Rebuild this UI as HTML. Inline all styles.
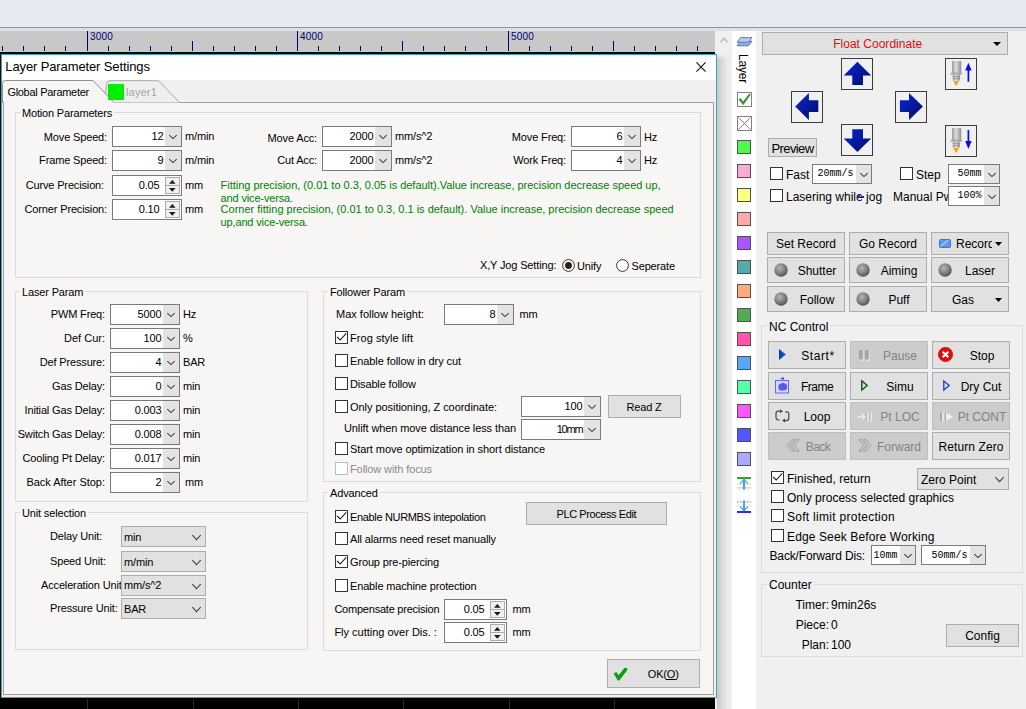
<!DOCTYPE html>
<html><head><meta charset="utf-8"><title>Layer Parameter Settings</title>
<style>
html,body{margin:0;padding:0;}
body{width:1026px;height:709px;overflow:hidden;position:relative;background:#f0f0f0;font-family:"Liberation Sans",sans-serif;font-size:11px;}
#root{position:absolute;left:0;top:0;width:1026px;height:709px;overflow:hidden;}
#root div{position:absolute;}
#root svg{position:absolute;overflow:visible;}
</style></head><body><div id="root">
<div style="left:0px;top:0px;width:1026px;height:27px;background:#e7eaf0;"></div>
<div style="left:0px;top:27px;width:1026px;height:1px;background:#90949c;"></div>
<div style="left:0px;top:28px;width:1026px;height:3px;background:#dde0e6;"></div>
<div style="left:0px;top:31px;width:715px;height:21px;background:#c8c8c8;"></div>
<div style="left:0px;top:52px;width:715px;height:2px;background:#000;"></div>
<div style="left:2px;top:46px;width:1px;height:5px;background:#00007a;"></div>
<div style="left:23px;top:46px;width:1px;height:5px;background:#00007a;"></div>
<div style="left:44px;top:46px;width:1px;height:5px;background:#00007a;"></div>
<div style="left:65px;top:46px;width:1px;height:5px;background:#00007a;"></div>
<div style="left:87px;top:31px;width:1px;height:20px;background:#00007a;"></div>
<div style="left:108px;top:46px;width:1px;height:5px;background:#00007a;"></div>
<div style="left:129px;top:46px;width:1px;height:5px;background:#00007a;"></div>
<div style="left:150px;top:46px;width:1px;height:5px;background:#00007a;"></div>
<div style="left:171px;top:46px;width:1px;height:5px;background:#00007a;"></div>
<div style="left:192px;top:41px;width:1px;height:10px;background:#00007a;"></div>
<div style="left:213px;top:46px;width:1px;height:5px;background:#00007a;"></div>
<div style="left:234px;top:46px;width:1px;height:5px;background:#00007a;"></div>
<div style="left:255px;top:46px;width:1px;height:5px;background:#00007a;"></div>
<div style="left:276px;top:46px;width:1px;height:5px;background:#00007a;"></div>
<div style="left:297px;top:31px;width:1px;height:20px;background:#00007a;"></div>
<div style="left:318px;top:46px;width:1px;height:5px;background:#00007a;"></div>
<div style="left:339px;top:46px;width:1px;height:5px;background:#00007a;"></div>
<div style="left:360px;top:46px;width:1px;height:5px;background:#00007a;"></div>
<div style="left:381px;top:46px;width:1px;height:5px;background:#00007a;"></div>
<div style="left:402px;top:41px;width:1px;height:10px;background:#00007a;"></div>
<div style="left:423px;top:46px;width:1px;height:5px;background:#00007a;"></div>
<div style="left:444px;top:46px;width:1px;height:5px;background:#00007a;"></div>
<div style="left:465px;top:46px;width:1px;height:5px;background:#00007a;"></div>
<div style="left:486px;top:46px;width:1px;height:5px;background:#00007a;"></div>
<div style="left:508px;top:31px;width:1px;height:20px;background:#00007a;"></div>
<div style="left:529px;top:46px;width:1px;height:5px;background:#00007a;"></div>
<div style="left:550px;top:46px;width:1px;height:5px;background:#00007a;"></div>
<div style="left:571px;top:46px;width:1px;height:5px;background:#00007a;"></div>
<div style="left:592px;top:46px;width:1px;height:5px;background:#00007a;"></div>
<div style="left:613px;top:41px;width:1px;height:10px;background:#00007a;"></div>
<div style="left:634px;top:46px;width:1px;height:5px;background:#00007a;"></div>
<div style="left:655px;top:46px;width:1px;height:5px;background:#00007a;"></div>
<div style="left:676px;top:46px;width:1px;height:5px;background:#00007a;"></div>
<div style="left:697px;top:46px;width:1px;height:5px;background:#00007a;"></div>
<div style="left:718px;top:31px;width:1px;height:20px;background:#00007a;"></div>
<div style="left:90.00px;top:30.00px;font-family:'Liberation Sans', sans-serif;font-size:10px;line-height:14px;color:#00007a;white-space:pre;letter-spacing:0.200px;">3000</div>
<div style="left:300.00px;top:30.00px;font-family:'Liberation Sans', sans-serif;font-size:10px;line-height:14px;color:#00007a;white-space:pre;letter-spacing:0.200px;">4000</div>
<div style="left:511.00px;top:30.00px;font-family:'Liberation Sans', sans-serif;font-size:10px;line-height:14px;color:#00007a;white-space:pre;letter-spacing:0.200px;">5000</div>
<div style="left:715px;top:31px;width:17px;height:678px;background:#f0f0f0;"></div>
<svg style="left:720px;top:37px" width="8" height="6" viewBox="0 0 8 6"><path d="M0.5 5.2 L4 1.2 L7.5 5.2" fill="none" stroke="#c0c0c0" stroke-width="1.7"/></svg>
<div style="left:717px;top:54px;width:15px;height:655px;background:linear-gradient(to right,#c6c6c6 0%,#d8d8d8 30%,#e9e9e9 65%,#f0f0f0 100%);"></div>
<div style="left:715px;top:54px;width:17px;height:6px;background:linear-gradient(to bottom,#f0f0f0 0%,rgba(240,240,240,0) 100%);"></div>
<div style="left:732px;top:31px;width:24px;height:678px;background:#fff;"></div>
<div style="left:0px;top:698px;width:715px;height:11px;background:#000;"></div>
<div style="left:87px;top:699px;width:1px;height:10px;background:#2a2a2a;"></div>
<div style="left:193px;top:699px;width:1px;height:10px;background:#2a2a2a;"></div>
<div style="left:298px;top:699px;width:1px;height:10px;background:#2a2a2a;"></div>
<div style="left:403px;top:699px;width:1px;height:10px;background:#2a2a2a;"></div>
<div style="left:509px;top:699px;width:1px;height:10px;background:#2a2a2a;"></div>
<div style="left:614px;top:699px;width:1px;height:10px;background:#2a2a2a;"></div>
<div style="left:0px;top:54px;width:717px;height:644px;background:#f0f0f0;border:1px solid #35a8c0;box-sizing:border-box;"></div>
<div style="left:0px;top:54px;width:1px;height:644px;background:#0a0a0a;"></div>
<div style="left:1px;top:54px;width:1px;height:643px;background:#35a8c0;"></div>
<div style="left:2px;top:55px;width:714px;height:25px;background:#fff;"></div>
<div style="left:5.30px;top:57.90px;font-family:'Liberation Sans', sans-serif;font-size:13px;line-height:17px;color:#000;white-space:pre;letter-spacing:-0.121px;">Layer Parameter Settings</div>
<svg style="left:696px;top:62px" width="10" height="10" viewBox="0 0 10 10"><path d="M0.4 0.4 L9.6 9.6 M9.6 0.4 L0.4 9.6" stroke="#111" stroke-width="1.1" fill="none"/></svg>
<div style="left:3px;top:102px;width:711px;height:593px;background:#f7f6f5;border:1px solid #a0a0a0;box-sizing:border-box;"></div>
<svg style="left:0;top:79px" width="220" height="28" viewBox="0 0 220 28">
<path d="M104.5 23.5 L106.5 4.5 Q107 1.7 110 1.7 L158.5 1.7 L179.5 23.5" fill="#efefee" stroke="#a8a8a8" stroke-width="1"/>
<path d="M2.5 24 L2.5 4.5 Q2.5 1.5 5.5 1.5 L93 1.5 L114 23.5" fill="#f7f6f5" stroke="#909090" stroke-width="1"/>
<rect x="3" y="23" width="110.5" height="2" fill="#f7f6f5"/>
<rect x="3" y="23" width="1" height="3" fill="#a0a0a0"/>
</svg>
<div style="left:7.40px;top:84.50px;font-family:'Liberation Sans', sans-serif;font-size:11px;line-height:15px;color:#000;white-space:pre;letter-spacing:-0.295px;">Global Parameter</div>
<div style="left:108px;top:84px;width:16px;height:16px;background:#00f000;"></div>
<div style="left:126.00px;top:85.00px;font-family:'Liberation Sans', sans-serif;font-size:11px;line-height:15px;color:#a4a4a4;white-space:pre;letter-spacing:0.172px;">layer1</div>
<div style="left:15px;top:112px;width:686px;height:166px;border:1px solid #dcdcdc;box-sizing:border-box;"></div>
<div style="left:22.00px;top:106.00px;font-family:'Liberation Sans', sans-serif;font-size:11px;line-height:15px;color:#000;white-space:pre;letter-spacing:-0.173px;background:#f7f6f5;padding:0 2px;margin-left:-2px;">Motion Parameters</div>
<div style="left:43.82px;top:130.00px;font-family:'Liberation Sans', sans-serif;font-size:11px;line-height:15px;color:#000;white-space:pre;letter-spacing:-0.150px;">Move Speed:</div>
<div style="left:112px;top:126px;width:70px;height:21px;background:#fff;border:1px solid #7a7a7a;box-sizing:border-box;"></div>
<div style="left:165px;top:127px;width:16px;height:19px;background:#e3e3e3;"></div>
<svg style="left:169.0px;top:135.0px" width="8" height="4" viewBox="0 0 8 4"><path d="M0.3 0.2 L4.0 3.6 L7.7 0.2" fill="none" stroke="#404040" stroke-width="1.1"/></svg>
<div style="left:151.55px;top:129.00px;font-family:'Liberation Sans', sans-serif;font-size:11px;line-height:15px;color:#000;white-space:pre;letter-spacing:-0.150px;">12</div>
<div style="left:185.00px;top:128.50px;font-family:'Liberation Sans', sans-serif;font-size:11px;line-height:15px;color:#000;white-space:pre;letter-spacing:-0.150px;">m/min</div>
<div style="left:39.10px;top:152.50px;font-family:'Liberation Sans', sans-serif;font-size:11px;line-height:15px;color:#000;white-space:pre;letter-spacing:-0.150px;">Frame Speed:</div>
<div style="left:112px;top:150px;width:70px;height:21px;background:#fff;border:1px solid #7a7a7a;box-sizing:border-box;"></div>
<div style="left:165px;top:151px;width:16px;height:19px;background:#e3e3e3;"></div>
<svg style="left:169.0px;top:159.0px" width="8" height="4" viewBox="0 0 8 4"><path d="M0.3 0.2 L4.0 3.6 L7.7 0.2" fill="none" stroke="#404040" stroke-width="1.1"/></svg>
<div style="left:157.53px;top:153.00px;font-family:'Liberation Sans', sans-serif;font-size:11px;line-height:15px;color:#000;white-space:pre;letter-spacing:-0.150px;">9</div>
<div style="left:185.00px;top:152.50px;font-family:'Liberation Sans', sans-serif;font-size:11px;line-height:15px;color:#000;white-space:pre;letter-spacing:-0.150px;">m/min</div>
<div style="left:25.70px;top:177.50px;font-family:'Liberation Sans', sans-serif;font-size:11px;line-height:15px;color:#000;white-space:pre;letter-spacing:-0.150px;">Curve Precision:</div>
<div style="left:112px;top:175px;width:70px;height:21px;background:#fff;border:1px solid #7a7a7a;box-sizing:border-box;"></div>
<div style="left:165px;top:177px;width:15px;height:9px;background:#f0f0f0;border:1px solid #acacac;box-sizing:border-box;"></div>
<div style="left:165px;top:185px;width:15px;height:9px;background:#f0f0f0;border:1px solid #acacac;box-sizing:border-box;"></div>
<svg style="left:169.2px;top:179.6px" width="6.6" height="3.8" viewBox="0 0 6.6 3.8"><path d="M0 3.8 L3.3 0 L6.6 3.8 Z" fill="#1a1a1a"/></svg>
<svg style="left:169.2px;top:187.6px" width="6.6" height="3.8" viewBox="0 0 6.6 3.8"><path d="M0 0 L3.3 3.8 L6.6 0 Z" fill="#1a1a1a"/></svg>
<div style="left:138.68px;top:178.00px;font-family:'Liberation Sans', sans-serif;font-size:11px;line-height:15px;color:#000;white-space:pre;letter-spacing:-0.150px;">0.05</div>
<div style="left:185.00px;top:177.50px;font-family:'Liberation Sans', sans-serif;font-size:11px;line-height:15px;color:#000;white-space:pre;letter-spacing:-0.150px;">mm</div>
<div style="left:24.57px;top:201.50px;font-family:'Liberation Sans', sans-serif;font-size:11px;line-height:15px;color:#000;white-space:pre;letter-spacing:-0.150px;">Corner Precision:</div>
<div style="left:112px;top:199px;width:70px;height:21px;background:#fff;border:1px solid #7a7a7a;box-sizing:border-box;"></div>
<div style="left:165px;top:201px;width:15px;height:9px;background:#f0f0f0;border:1px solid #acacac;box-sizing:border-box;"></div>
<div style="left:165px;top:209px;width:15px;height:9px;background:#f0f0f0;border:1px solid #acacac;box-sizing:border-box;"></div>
<svg style="left:169.2px;top:203.6px" width="6.6" height="3.8" viewBox="0 0 6.6 3.8"><path d="M0 3.8 L3.3 0 L6.6 3.8 Z" fill="#1a1a1a"/></svg>
<svg style="left:169.2px;top:211.6px" width="6.6" height="3.8" viewBox="0 0 6.6 3.8"><path d="M0 0 L3.3 3.8 L6.6 0 Z" fill="#1a1a1a"/></svg>
<div style="left:138.68px;top:202.00px;font-family:'Liberation Sans', sans-serif;font-size:11px;line-height:15px;color:#000;white-space:pre;letter-spacing:-0.150px;">0.10</div>
<div style="left:185.00px;top:201.50px;font-family:'Liberation Sans', sans-serif;font-size:11px;line-height:15px;color:#000;white-space:pre;letter-spacing:-0.150px;">mm</div>
<div style="left:267.60px;top:130.50px;font-family:'Liberation Sans', sans-serif;font-size:11px;line-height:15px;color:#000;white-space:pre;letter-spacing:-0.150px;">Move Acc:</div>
<div style="left:322px;top:126px;width:70px;height:21px;background:#fff;border:1px solid #7a7a7a;box-sizing:border-box;"></div>
<div style="left:375px;top:127px;width:16px;height:19px;background:#e3e3e3;"></div>
<svg style="left:379.0px;top:135.0px" width="8" height="4" viewBox="0 0 8 4"><path d="M0.3 0.2 L4.0 3.6 L7.7 0.2" fill="none" stroke="#404040" stroke-width="1.1"/></svg>
<div style="left:349.62px;top:129.00px;font-family:'Liberation Sans', sans-serif;font-size:11px;line-height:15px;color:#000;white-space:pre;letter-spacing:-0.150px;">2000</div>
<div style="left:395.00px;top:128.50px;font-family:'Liberation Sans', sans-serif;font-size:11px;line-height:15px;color:#000;white-space:pre;letter-spacing:-0.150px;">mm/s^2</div>
<div style="left:277.23px;top:152.50px;font-family:'Liberation Sans', sans-serif;font-size:11px;line-height:15px;color:#000;white-space:pre;letter-spacing:-0.150px;">Cut Acc:</div>
<div style="left:322px;top:150px;width:70px;height:21px;background:#fff;border:1px solid #7a7a7a;box-sizing:border-box;"></div>
<div style="left:375px;top:151px;width:16px;height:19px;background:#e3e3e3;"></div>
<svg style="left:379.0px;top:159.0px" width="8" height="4" viewBox="0 0 8 4"><path d="M0.3 0.2 L4.0 3.6 L7.7 0.2" fill="none" stroke="#404040" stroke-width="1.1"/></svg>
<div style="left:349.62px;top:153.00px;font-family:'Liberation Sans', sans-serif;font-size:11px;line-height:15px;color:#000;white-space:pre;letter-spacing:-0.150px;">2000</div>
<div style="left:395.00px;top:152.50px;font-family:'Liberation Sans', sans-serif;font-size:11px;line-height:15px;color:#000;white-space:pre;letter-spacing:-0.150px;">mm/s^2</div>
<div style="left:511.86px;top:129.50px;font-family:'Liberation Sans', sans-serif;font-size:11px;line-height:15px;color:#000;white-space:pre;letter-spacing:-0.150px;">Move Freq:</div>
<div style="left:571px;top:126px;width:70px;height:21px;background:#fff;border:1px solid #7a7a7a;box-sizing:border-box;"></div>
<div style="left:624px;top:127px;width:16px;height:19px;background:#e3e3e3;"></div>
<svg style="left:628.0px;top:135.0px" width="8" height="4" viewBox="0 0 8 4"><path d="M0.3 0.2 L4.0 3.6 L7.7 0.2" fill="none" stroke="#404040" stroke-width="1.1"/></svg>
<div style="left:616.52px;top:129.00px;font-family:'Liberation Sans', sans-serif;font-size:11px;line-height:15px;color:#000;white-space:pre;letter-spacing:-0.150px;">6</div>
<div style="left:644.00px;top:129.50px;font-family:'Liberation Sans', sans-serif;font-size:11px;line-height:15px;color:#000;white-space:pre;letter-spacing:-0.150px;">Hz</div>
<div style="left:513.30px;top:152.50px;font-family:'Liberation Sans', sans-serif;font-size:11px;line-height:15px;color:#000;white-space:pre;letter-spacing:-0.150px;">Work Freq:</div>
<div style="left:571px;top:150px;width:70px;height:21px;background:#fff;border:1px solid #7a7a7a;box-sizing:border-box;"></div>
<div style="left:624px;top:151px;width:16px;height:19px;background:#e3e3e3;"></div>
<svg style="left:628.0px;top:159.0px" width="8" height="4" viewBox="0 0 8 4"><path d="M0.3 0.2 L4.0 3.6 L7.7 0.2" fill="none" stroke="#404040" stroke-width="1.1"/></svg>
<div style="left:616.52px;top:153.00px;font-family:'Liberation Sans', sans-serif;font-size:11px;line-height:15px;color:#000;white-space:pre;letter-spacing:-0.150px;">4</div>
<div style="left:644.00px;top:152.50px;font-family:'Liberation Sans', sans-serif;font-size:11px;line-height:15px;color:#000;white-space:pre;letter-spacing:-0.150px;">Hz</div>
<div style="left:220.60px;top:177.50px;font-family:'Liberation Sans', sans-serif;font-size:11px;line-height:15px;color:#008000;white-space:pre;letter-spacing:-0.020px;">Fitting precision, (0.01 to 0.3, 0.05 is default).Value increase, precision decrease speed up,</div>
<div style="left:220.60px;top:190.50px;font-family:'Liberation Sans', sans-serif;font-size:11px;line-height:15px;color:#008000;white-space:pre;letter-spacing:-0.150px;">and vice-versa.</div>
<div style="left:220.60px;top:201.50px;font-family:'Liberation Sans', sans-serif;font-size:11px;line-height:15px;color:#008000;white-space:pre;letter-spacing:-0.005px;">Corner fitting precision, (0.01 to 0.3, 0.1 is default). Value increase, precision decrease speed</div>
<div style="left:220.60px;top:214.50px;font-family:'Liberation Sans', sans-serif;font-size:11px;line-height:15px;color:#008000;white-space:pre;letter-spacing:-0.150px;">up,and vice-versa.</div>
<div style="left:480.00px;top:257.50px;font-family:'Liberation Sans', sans-serif;font-size:11px;line-height:15px;color:#000;white-space:pre;letter-spacing:-0.150px;">X,Y Jog Setting:</div>
<svg style="left:562px;top:259px" width="13" height="13" viewBox="0 0 13 13"><circle cx="6.5" cy="6.5" r="5.9" fill="#fff" stroke="#333" stroke-width="1"/><circle cx="6.5" cy="6.5" r="3.4" fill="#222"/></svg>
<div style="left:577.00px;top:258.50px;font-family:'Liberation Sans', sans-serif;font-size:11px;line-height:15px;color:#000;white-space:pre;letter-spacing:-0.150px;">Unify</div>
<svg style="left:616px;top:259px" width="13" height="13" viewBox="0 0 13 13"><circle cx="6.5" cy="6.5" r="5.9" fill="#fff" stroke="#333" stroke-width="1"/></svg>
<div style="left:631.50px;top:258.50px;font-family:'Liberation Sans', sans-serif;font-size:11px;line-height:15px;color:#000;white-space:pre;letter-spacing:-0.150px;">Seperate</div>
<div style="left:15px;top:291px;width:293px;height:211px;border:1px solid #dcdcdc;box-sizing:border-box;"></div>
<div style="left:22.00px;top:285.00px;font-family:'Liberation Sans', sans-serif;font-size:11px;line-height:15px;color:#000;white-space:pre;letter-spacing:-0.150px;background:#f7f6f5;padding:0 2px;margin-left:-2px;">Laser Param</div>
<div style="left:50.73px;top:306.50px;font-family:'Liberation Sans', sans-serif;font-size:11px;line-height:15px;color:#000;white-space:pre;letter-spacing:-0.150px;">PWM Freq:</div>
<div style="left:110px;top:304px;width:70px;height:21px;background:#fff;border:1px solid #7a7a7a;box-sizing:border-box;"></div>
<div style="left:163px;top:305px;width:16px;height:19px;background:#e3e3e3;"></div>
<svg style="left:167.0px;top:313.0px" width="8" height="4" viewBox="0 0 8 4"><path d="M0.3 0.2 L4.0 3.6 L7.7 0.2" fill="none" stroke="#404040" stroke-width="1.1"/></svg>
<div style="left:137.62px;top:307.00px;font-family:'Liberation Sans', sans-serif;font-size:11px;line-height:15px;color:#000;white-space:pre;letter-spacing:-0.150px;">5000</div>
<div style="left:183.00px;top:306.50px;font-family:'Liberation Sans', sans-serif;font-size:11px;line-height:15px;color:#000;white-space:pre;letter-spacing:-0.150px;">Hz</div>
<div style="left:64.00px;top:330.50px;font-family:'Liberation Sans', sans-serif;font-size:11px;line-height:15px;color:#000;white-space:pre;letter-spacing:0.004px;">Def Cur:</div>
<div style="left:110px;top:328px;width:70px;height:21px;background:#fff;border:1px solid #7a7a7a;box-sizing:border-box;"></div>
<div style="left:163px;top:329px;width:16px;height:19px;background:#e3e3e3;"></div>
<svg style="left:167.0px;top:337.0px" width="8" height="4" viewBox="0 0 8 4"><path d="M0.3 0.2 L4.0 3.6 L7.7 0.2" fill="none" stroke="#404040" stroke-width="1.1"/></svg>
<div style="left:143.59px;top:331.00px;font-family:'Liberation Sans', sans-serif;font-size:11px;line-height:15px;color:#000;white-space:pre;letter-spacing:-0.150px;">100</div>
<div style="left:183.00px;top:330.50px;font-family:'Liberation Sans', sans-serif;font-size:11px;line-height:15px;color:#000;white-space:pre;letter-spacing:-0.150px;">%</div>
<div style="left:39.70px;top:354.50px;font-family:'Liberation Sans', sans-serif;font-size:11px;line-height:15px;color:#000;white-space:pre;letter-spacing:-0.150px;">Def Pressure:</div>
<div style="left:110px;top:352px;width:70px;height:21px;background:#fff;border:1px solid #7a7a7a;box-sizing:border-box;"></div>
<div style="left:163px;top:353px;width:16px;height:19px;background:#e3e3e3;"></div>
<svg style="left:167.0px;top:361.0px" width="8" height="4" viewBox="0 0 8 4"><path d="M0.3 0.2 L4.0 3.6 L7.7 0.2" fill="none" stroke="#404040" stroke-width="1.1"/></svg>
<div style="left:155.53px;top:355.00px;font-family:'Liberation Sans', sans-serif;font-size:11px;line-height:15px;color:#000;white-space:pre;letter-spacing:-0.150px;">4</div>
<div style="left:183.00px;top:354.50px;font-family:'Liberation Sans', sans-serif;font-size:11px;line-height:15px;color:#000;white-space:pre;letter-spacing:-0.150px;">BAR</div>
<div style="left:52.08px;top:378.50px;font-family:'Liberation Sans', sans-serif;font-size:11px;line-height:15px;color:#000;white-space:pre;letter-spacing:-0.150px;">Gas Delay:</div>
<div style="left:110px;top:376px;width:70px;height:21px;background:#fff;border:1px solid #7a7a7a;box-sizing:border-box;"></div>
<div style="left:163px;top:377px;width:16px;height:19px;background:#e3e3e3;"></div>
<svg style="left:167.0px;top:385.0px" width="8" height="4" viewBox="0 0 8 4"><path d="M0.3 0.2 L4.0 3.6 L7.7 0.2" fill="none" stroke="#404040" stroke-width="1.1"/></svg>
<div style="left:155.53px;top:379.00px;font-family:'Liberation Sans', sans-serif;font-size:11px;line-height:15px;color:#000;white-space:pre;letter-spacing:-0.150px;">0</div>
<div style="left:183.00px;top:378.50px;font-family:'Liberation Sans', sans-serif;font-size:11px;line-height:15px;color:#000;white-space:pre;letter-spacing:-0.150px;">min</div>
<div style="left:24.54px;top:402.50px;font-family:'Liberation Sans', sans-serif;font-size:11px;line-height:15px;color:#000;white-space:pre;letter-spacing:-0.150px;">Initial Gas Delay:</div>
<div style="left:110px;top:400px;width:70px;height:21px;background:#fff;border:1px solid #7a7a7a;box-sizing:border-box;"></div>
<div style="left:163px;top:401px;width:16px;height:19px;background:#e3e3e3;"></div>
<svg style="left:167.0px;top:409.0px" width="8" height="4" viewBox="0 0 8 4"><path d="M0.3 0.2 L4.0 3.6 L7.7 0.2" fill="none" stroke="#404040" stroke-width="1.1"/></svg>
<div style="left:134.72px;top:403.00px;font-family:'Liberation Sans', sans-serif;font-size:11px;line-height:15px;color:#000;white-space:pre;letter-spacing:-0.150px;">0.003</div>
<div style="left:183.00px;top:402.50px;font-family:'Liberation Sans', sans-serif;font-size:11px;line-height:15px;color:#000;white-space:pre;letter-spacing:-0.150px;">min</div>
<div style="left:17.67px;top:426.50px;font-family:'Liberation Sans', sans-serif;font-size:11px;line-height:15px;color:#000;white-space:pre;letter-spacing:-0.150px;">Switch Gas Delay:</div>
<div style="left:110px;top:424px;width:70px;height:21px;background:#fff;border:1px solid #7a7a7a;box-sizing:border-box;"></div>
<div style="left:163px;top:425px;width:16px;height:19px;background:#e3e3e3;"></div>
<svg style="left:167.0px;top:433.0px" width="8" height="4" viewBox="0 0 8 4"><path d="M0.3 0.2 L4.0 3.6 L7.7 0.2" fill="none" stroke="#404040" stroke-width="1.1"/></svg>
<div style="left:134.72px;top:427.00px;font-family:'Liberation Sans', sans-serif;font-size:11px;line-height:15px;color:#000;white-space:pre;letter-spacing:-0.150px;">0.008</div>
<div style="left:183.00px;top:426.50px;font-family:'Liberation Sans', sans-serif;font-size:11px;line-height:15px;color:#000;white-space:pre;letter-spacing:-0.150px;">min</div>
<div style="left:22.55px;top:450.50px;font-family:'Liberation Sans', sans-serif;font-size:11px;line-height:15px;color:#000;white-space:pre;letter-spacing:-0.150px;">Cooling Pt Delay:</div>
<div style="left:110px;top:448px;width:70px;height:21px;background:#fff;border:1px solid #7a7a7a;box-sizing:border-box;"></div>
<div style="left:163px;top:449px;width:16px;height:19px;background:#e3e3e3;"></div>
<svg style="left:167.0px;top:457.0px" width="8" height="4" viewBox="0 0 8 4"><path d="M0.3 0.2 L4.0 3.6 L7.7 0.2" fill="none" stroke="#404040" stroke-width="1.1"/></svg>
<div style="left:134.72px;top:451.00px;font-family:'Liberation Sans', sans-serif;font-size:11px;line-height:15px;color:#000;white-space:pre;letter-spacing:-0.150px;">0.017</div>
<div style="left:183.00px;top:450.50px;font-family:'Liberation Sans', sans-serif;font-size:11px;line-height:15px;color:#000;white-space:pre;letter-spacing:-0.150px;">min</div>
<div style="left:26.40px;top:474.50px;font-family:'Liberation Sans', sans-serif;font-size:11px;line-height:15px;color:#000;white-space:pre;letter-spacing:-0.017px;">Back After Stop:</div>
<div style="left:110px;top:472px;width:70px;height:21px;background:#fff;border:1px solid #7a7a7a;box-sizing:border-box;"></div>
<div style="left:163px;top:473px;width:16px;height:19px;background:#e3e3e3;"></div>
<svg style="left:167.0px;top:481.0px" width="8" height="4" viewBox="0 0 8 4"><path d="M0.3 0.2 L4.0 3.6 L7.7 0.2" fill="none" stroke="#404040" stroke-width="1.1"/></svg>
<div style="left:155.53px;top:475.00px;font-family:'Liberation Sans', sans-serif;font-size:11px;line-height:15px;color:#000;white-space:pre;letter-spacing:-0.150px;">2</div>
<div style="left:185.00px;top:474.50px;font-family:'Liberation Sans', sans-serif;font-size:11px;line-height:15px;color:#000;white-space:pre;letter-spacing:-0.150px;">mm</div>
<div style="left:15px;top:512px;width:293px;height:138px;border:1px solid #dcdcdc;box-sizing:border-box;"></div>
<div style="left:22.00px;top:506.00px;font-family:'Liberation Sans', sans-serif;font-size:11px;line-height:15px;color:#000;white-space:pre;letter-spacing:-0.150px;background:#f7f6f5;padding:0 2px;margin-left:-2px;">Unit selection</div>
<div style="left:121px;top:526px;width:85px;height:21px;background:#e1e1e1;border:1px solid #adadad;box-sizing:border-box;"></div>
<svg style="left:191.5px;top:534.5px" width="9" height="5" viewBox="0 0 9 5"><path d="M0.3 0.2 L4.5 4.6 L8.7 0.2" fill="none" stroke="#404040" stroke-width="1.1"/></svg>
<div style="left:124.00px;top:529.60px;font-family:'Liberation Sans', sans-serif;font-size:11px;line-height:15px;color:#000;white-space:pre;letter-spacing:-0.150px;">min</div>
<div style="left:50.00px;top:528.50px;font-family:'Liberation Sans', sans-serif;font-size:11px;line-height:15px;color:#000;white-space:pre;letter-spacing:-0.150px;">Delay Unit:</div>
<div style="left:121px;top:551px;width:85px;height:21px;background:#e1e1e1;border:1px solid #adadad;box-sizing:border-box;"></div>
<svg style="left:191.5px;top:559.5px" width="9" height="5" viewBox="0 0 9 5"><path d="M0.3 0.2 L4.5 4.6 L8.7 0.2" fill="none" stroke="#404040" stroke-width="1.1"/></svg>
<div style="left:124.00px;top:554.60px;font-family:'Liberation Sans', sans-serif;font-size:11px;line-height:15px;color:#000;white-space:pre;letter-spacing:-0.150px;">m/min</div>
<div style="left:50.00px;top:553.50px;font-family:'Liberation Sans', sans-serif;font-size:11px;line-height:15px;color:#000;white-space:pre;letter-spacing:-0.150px;">Speed Unit:</div>
<div style="left:121px;top:575px;width:85px;height:21px;background:#e1e1e1;border:1px solid #adadad;box-sizing:border-box;"></div>
<svg style="left:191.5px;top:583.5px" width="9" height="5" viewBox="0 0 9 5"><path d="M0.3 0.2 L4.5 4.6 L8.7 0.2" fill="none" stroke="#404040" stroke-width="1.1"/></svg>
<div style="left:124.00px;top:578.60px;font-family:'Liberation Sans', sans-serif;font-size:11px;line-height:15px;color:#000;white-space:pre;letter-spacing:-0.150px;">mm/s^2</div>
<div style="left:41.00px;top:577.50px;font-family:'Liberation Sans', sans-serif;font-size:11px;line-height:15px;color:#000;white-space:pre;letter-spacing:-0.150px;background:#f7f6f5;">Acceleration Unit</div>
<div style="left:121px;top:598px;width:85px;height:21px;background:#e1e1e1;border:1px solid #adadad;box-sizing:border-box;"></div>
<svg style="left:191.5px;top:606.5px" width="9" height="5" viewBox="0 0 9 5"><path d="M0.3 0.2 L4.5 4.6 L8.7 0.2" fill="none" stroke="#404040" stroke-width="1.1"/></svg>
<div style="left:124.00px;top:601.60px;font-family:'Liberation Sans', sans-serif;font-size:11px;line-height:15px;color:#000;white-space:pre;letter-spacing:-0.150px;">BAR</div>
<div style="left:50.00px;top:600.50px;font-family:'Liberation Sans', sans-serif;font-size:11px;line-height:15px;color:#000;white-space:pre;letter-spacing:-0.150px;">Pressure Unit:</div>
<div style="left:121px;top:575px;width:85px;height:21px;background:#e1e1e1;border:1px solid #adadad;box-sizing:border-box;"></div>
<svg style="left:191.5px;top:583.5px" width="9" height="5" viewBox="0 0 9 5"><path d="M0.3 0.2 L4.5 4.6 L8.7 0.2" fill="none" stroke="#404040" stroke-width="1.1"/></svg>
<div style="left:124.00px;top:578.00px;font-family:'Liberation Sans', sans-serif;font-size:11px;line-height:15px;color:#000;white-space:pre;letter-spacing:-0.150px;">mm/s^2</div>
<div style="left:323px;top:291px;width:378px;height:191px;border:1px solid #dcdcdc;box-sizing:border-box;"></div>
<div style="left:330.00px;top:285.00px;font-family:'Liberation Sans', sans-serif;font-size:11px;line-height:15px;color:#000;white-space:pre;letter-spacing:-0.150px;background:#f7f6f5;padding:0 2px;margin-left:-2px;">Follower Param</div>
<div style="left:336.00px;top:306.50px;font-family:'Liberation Sans', sans-serif;font-size:11px;line-height:15px;color:#000;white-space:pre;letter-spacing:-0.003px;">Max follow height:</div>
<div style="left:444px;top:304px;width:70px;height:21px;background:#fff;border:1px solid #7a7a7a;box-sizing:border-box;"></div>
<div style="left:497px;top:305px;width:16px;height:19px;background:#e3e3e3;"></div>
<svg style="left:501.0px;top:313.0px" width="8" height="4" viewBox="0 0 8 4"><path d="M0.3 0.2 L4.0 3.6 L7.7 0.2" fill="none" stroke="#404040" stroke-width="1.1"/></svg>
<div style="left:489.52px;top:307.00px;font-family:'Liberation Sans', sans-serif;font-size:11px;line-height:15px;color:#000;white-space:pre;letter-spacing:-0.150px;">8</div>
<div style="left:519.50px;top:306.50px;font-family:'Liberation Sans', sans-serif;font-size:11px;line-height:15px;color:#000;white-space:pre;letter-spacing:-0.150px;">mm</div>
<div style="left:335px;top:331px;width:13px;height:13px;background:#fff;border:1px solid #333;box-sizing:border-box;"></div>
<svg style="left:335px;top:331px" width="13" height="13" viewBox="0 0 13 13"><path d="M2 5.8 L5.2 9 L11.2 2.4" fill="none" stroke="#1a1a1a" stroke-width="1.1"/></svg>
<div style="left:350.00px;top:330.50px;font-family:'Liberation Sans', sans-serif;font-size:11px;line-height:15px;color:#000;white-space:pre;letter-spacing:0.043px;">Frog style lift</div>
<div style="left:335px;top:354px;width:13px;height:13px;background:#fff;border:1px solid #333;box-sizing:border-box;"></div>
<div style="left:350.00px;top:353.50px;font-family:'Liberation Sans', sans-serif;font-size:11px;line-height:15px;color:#000;white-space:pre;letter-spacing:-0.089px;">Enable follow in dry cut</div>
<div style="left:335px;top:377px;width:13px;height:13px;background:#fff;border:1px solid #333;box-sizing:border-box;"></div>
<div style="left:350.00px;top:376.50px;font-family:'Liberation Sans', sans-serif;font-size:11px;line-height:15px;color:#000;white-space:pre;letter-spacing:-0.150px;">Disable follow</div>
<div style="left:335px;top:400px;width:13px;height:13px;background:#fff;border:1px solid #333;box-sizing:border-box;"></div>
<div style="left:350.00px;top:399.50px;font-family:'Liberation Sans', sans-serif;font-size:11px;line-height:15px;color:#000;white-space:pre;letter-spacing:-0.051px;">Only positioning, Z coordinate:</div>
<div style="left:521px;top:396px;width:80px;height:21px;background:#fff;border:1px solid #7a7a7a;box-sizing:border-box;"></div>
<div style="left:584px;top:397px;width:16px;height:19px;background:#e3e3e3;"></div>
<svg style="left:588.0px;top:405.0px" width="8" height="4" viewBox="0 0 8 4"><path d="M0.3 0.2 L4.0 3.6 L7.7 0.2" fill="none" stroke="#404040" stroke-width="1.1"/></svg>
<div style="left:564.59px;top:399.00px;font-family:'Liberation Sans', sans-serif;font-size:11px;line-height:15px;color:#000;white-space:pre;letter-spacing:-0.150px;">100</div>
<div style="left:608px;top:395px;width:73px;height:23px;background:#e1e1e1;border:1px solid #adadad;box-sizing:border-box;"></div>
<div style="left:626.41px;top:399.70px;font-family:'Liberation Sans', sans-serif;font-size:11px;line-height:15px;color:#000;white-space:pre;letter-spacing:-0.150px;">Read Z</div>
<div style="left:344.00px;top:420.50px;font-family:'Liberation Sans', sans-serif;font-size:11px;line-height:15px;color:#000;white-space:pre;letter-spacing:-0.100px;">Unlift when move distance less than</div>
<div style="left:521px;top:419px;width:80px;height:21px;background:#fff;border:1px solid #7a7a7a;box-sizing:border-box;"></div>
<div style="left:584px;top:420px;width:16px;height:19px;background:#e3e3e3;"></div>
<svg style="left:588.0px;top:428.0px" width="8" height="4" viewBox="0 0 8 4"><path d="M0.3 0.2 L4.0 3.6 L7.7 0.2" fill="none" stroke="#404040" stroke-width="1.1"/></svg>
<div style="left:556.70px;top:422.00px;font-family:'Liberation Sans', sans-serif;font-size:11px;line-height:15px;color:#000;white-space:pre;letter-spacing:-1.191px;">10mm</div>
<div style="left:335px;top:442px;width:13px;height:13px;background:#fff;border:1px solid #333;box-sizing:border-box;"></div>
<div style="left:350.00px;top:441.50px;font-family:'Liberation Sans', sans-serif;font-size:11px;line-height:15px;color:#000;white-space:pre;letter-spacing:-0.075px;">Start move optimization in short distance</div>
<div style="left:335px;top:462px;width:13px;height:13px;background:#fff;border:1px solid #bcbcbc;box-sizing:border-box;"></div>
<div style="left:350.00px;top:461.50px;font-family:'Liberation Sans', sans-serif;font-size:11px;line-height:15px;color:#8a8a8a;white-space:pre;letter-spacing:-0.104px;">Follow with focus</div>
<div style="left:323px;top:492px;width:378px;height:159px;border:1px solid #dcdcdc;box-sizing:border-box;"></div>
<div style="left:330.00px;top:486.00px;font-family:'Liberation Sans', sans-serif;font-size:11px;line-height:15px;color:#000;white-space:pre;letter-spacing:-0.150px;background:#f7f6f5;padding:0 2px;margin-left:-2px;">Advanced</div>
<div style="left:335px;top:510px;width:13px;height:13px;background:#fff;border:1px solid #333;box-sizing:border-box;"></div>
<svg style="left:335px;top:510px" width="13" height="13" viewBox="0 0 13 13"><path d="M2 5.8 L5.2 9 L11.2 2.4" fill="none" stroke="#1a1a1a" stroke-width="1.1"/></svg>
<div style="left:350.00px;top:509.50px;font-family:'Liberation Sans', sans-serif;font-size:11px;line-height:15px;color:#000;white-space:pre;letter-spacing:-0.339px;">Enable NURMBS intepolation</div>
<div style="left:526px;top:502px;width:141px;height:23px;background:#e1e1e1;border:1px solid #adadad;box-sizing:border-box;"></div>
<div style="left:556.55px;top:506.70px;font-family:'Liberation Sans', sans-serif;font-size:11px;line-height:15px;color:#000;white-space:pre;letter-spacing:-0.419px;">PLC Process Edit</div>
<div style="left:335px;top:532px;width:13px;height:13px;background:#fff;border:1px solid #333;box-sizing:border-box;"></div>
<div style="left:350.00px;top:531.50px;font-family:'Liberation Sans', sans-serif;font-size:11px;line-height:15px;color:#000;white-space:pre;letter-spacing:-0.150px;">All alarms need reset manually</div>
<div style="left:335px;top:555px;width:13px;height:13px;background:#fff;border:1px solid #333;box-sizing:border-box;"></div>
<svg style="left:335px;top:555px" width="13" height="13" viewBox="0 0 13 13"><path d="M2 5.8 L5.2 9 L11.2 2.4" fill="none" stroke="#1a1a1a" stroke-width="1.1"/></svg>
<div style="left:350.00px;top:554.50px;font-family:'Liberation Sans', sans-serif;font-size:11px;line-height:15px;color:#000;white-space:pre;letter-spacing:-0.150px;">Group pre-piercing</div>
<div style="left:335px;top:579px;width:13px;height:13px;background:#fff;border:1px solid #333;box-sizing:border-box;"></div>
<div style="left:350.00px;top:578.50px;font-family:'Liberation Sans', sans-serif;font-size:11px;line-height:15px;color:#000;white-space:pre;letter-spacing:-0.150px;">Enable machine protection</div>
<div style="left:334.40px;top:601.50px;font-family:'Liberation Sans', sans-serif;font-size:11px;line-height:15px;color:#000;white-space:pre;letter-spacing:-0.223px;">Compensate precision</div>
<div style="left:444px;top:599px;width:63px;height:21px;background:#fff;border:1px solid #7a7a7a;box-sizing:border-box;"></div>
<div style="left:490px;top:601px;width:15px;height:9px;background:#f0f0f0;border:1px solid #acacac;box-sizing:border-box;"></div>
<div style="left:490px;top:609px;width:15px;height:9px;background:#f0f0f0;border:1px solid #acacac;box-sizing:border-box;"></div>
<svg style="left:494.2px;top:603.6px" width="6.6" height="3.8" viewBox="0 0 6.6 3.8"><path d="M0 3.8 L3.3 0 L6.6 3.8 Z" fill="#1a1a1a"/></svg>
<svg style="left:494.2px;top:611.6px" width="6.6" height="3.8" viewBox="0 0 6.6 3.8"><path d="M0 0 L3.3 3.8 L6.6 0 Z" fill="#1a1a1a"/></svg>
<div style="left:463.68px;top:602.00px;font-family:'Liberation Sans', sans-serif;font-size:11px;line-height:15px;color:#000;white-space:pre;letter-spacing:-0.150px;">0.05</div>
<div style="left:512.50px;top:601.50px;font-family:'Liberation Sans', sans-serif;font-size:11px;line-height:15px;color:#000;white-space:pre;letter-spacing:-0.150px;">mm</div>
<div style="left:334.40px;top:624.50px;font-family:'Liberation Sans', sans-serif;font-size:11px;line-height:15px;color:#000;white-space:pre;letter-spacing:-0.009px;">Fly cutting over Dis. :</div>
<div style="left:444px;top:622px;width:63px;height:21px;background:#fff;border:1px solid #7a7a7a;box-sizing:border-box;"></div>
<div style="left:490px;top:624px;width:15px;height:9px;background:#f0f0f0;border:1px solid #acacac;box-sizing:border-box;"></div>
<div style="left:490px;top:632px;width:15px;height:9px;background:#f0f0f0;border:1px solid #acacac;box-sizing:border-box;"></div>
<svg style="left:494.2px;top:626.6px" width="6.6" height="3.8" viewBox="0 0 6.6 3.8"><path d="M0 3.8 L3.3 0 L6.6 3.8 Z" fill="#1a1a1a"/></svg>
<svg style="left:494.2px;top:634.6px" width="6.6" height="3.8" viewBox="0 0 6.6 3.8"><path d="M0 0 L3.3 3.8 L6.6 0 Z" fill="#1a1a1a"/></svg>
<div style="left:463.68px;top:625.00px;font-family:'Liberation Sans', sans-serif;font-size:11px;line-height:15px;color:#000;white-space:pre;letter-spacing:-0.150px;">0.05</div>
<div style="left:512.50px;top:624.50px;font-family:'Liberation Sans', sans-serif;font-size:11px;line-height:15px;color:#000;white-space:pre;letter-spacing:-0.150px;">mm</div>
<div style="left:607px;top:659px;width:93px;height:29px;background:#e1e1e1;border:1px solid #adadad;box-sizing:border-box;"></div>
<div style="left:647.78px;top:666.70px;font-family:'Liberation Sans', sans-serif;font-size:11px;line-height:15px;color:#000;white-space:pre;letter-spacing:-0.150px;">OK(O)</div>
<div style="left:666px;top:679px;width:10px;height:1px;background:#000;"></div>
<svg style="left:613px;top:667px" width="15" height="14" viewBox="0 0 15 14"><path d="M0.7 6.5 L3.3 4.9 L5.6 8.2 L11.7 0.8 L14.3 1.2 L14.1 3.3 L6.3 13.4 L4.7 13.4 Z" fill="#0f9a10"/></svg>
<svg style="left:736px;top:36px" width="17" height="13" viewBox="0 0 17 13">
<path d="M4.6 5.2 L16 5.2 L12.4 9.8 L1 9.8 Z" fill="#8fb0e0" stroke="#3f5ea6" stroke-width="0.8"/>
<path d="M4.6 1.6 L16 1.6 L12.4 6.2 L1 6.2 Z" fill="#b4cdee" stroke="#4866ac" stroke-width="0.8"/>
</svg>
<div style="left:750px;top:54px;width:32px;height:14px;font-size:12px;letter-spacing:-0.2px;line-height:14px;transform-origin:0 0;transform:rotate(90deg);color:#000;font-family:&quot;Liberation Sans&quot;,sans-serif;">Layer</div>
<div style="left:737px;top:92px;width:15px;height:15px;background:#fff;border:1px solid #808080;box-sizing:border-box;"></div>
<svg style="left:737px;top:92px" width="15" height="15" viewBox="0 0 15 15"><path d="M1.5 7.6 L3.6 6 L6 9.4 L12.3 1.6 L13.8 2.6 L6.2 13.2 Z" fill="#2f9a30"/></svg>
<div style="left:737px;top:116px;width:15px;height:15px;background:#fff;border:1px solid #808080;box-sizing:border-box;"></div>
<svg style="left:737px;top:116px" width="15" height="15" viewBox="0 0 15 15"><path d="M1.5 1.5 L13.5 13.5 M13.5 1.5 L1.5 13.5" stroke="#f05050" stroke-width="0.9" fill="none"/></svg>
<div style="left:737px;top:140px;width:14px;height:14px;background:#4dfa4d;border:1px solid #505050;box-sizing:border-box;"></div>
<div style="left:737px;top:164px;width:14px;height:14px;background:#ffaad4;border:1px solid #505050;box-sizing:border-box;"></div>
<div style="left:737px;top:188px;width:14px;height:14px;background:#ffff7f;border:1px solid #505050;box-sizing:border-box;"></div>
<div style="left:737px;top:212px;width:14px;height:14px;background:#ffaaaa;border:1px solid #505050;box-sizing:border-box;"></div>
<div style="left:737px;top:236px;width:14px;height:14px;background:#aa55ff;border:1px solid #505050;box-sizing:border-box;"></div>
<div style="left:737px;top:260px;width:14px;height:14px;background:#55aaaa;border:1px solid #505050;box-sizing:border-box;"></div>
<div style="left:737px;top:284px;width:14px;height:14px;background:#ffaa7f;border:1px solid #505050;box-sizing:border-box;"></div>
<div style="left:737px;top:308px;width:14px;height:14px;background:#55aa55;border:1px solid #505050;box-sizing:border-box;"></div>
<div style="left:737px;top:332px;width:14px;height:14px;background:#ff55aa;border:1px solid #505050;box-sizing:border-box;"></div>
<div style="left:737px;top:356px;width:14px;height:14px;background:#55aaff;border:1px solid #505050;box-sizing:border-box;"></div>
<div style="left:737px;top:380px;width:14px;height:14px;background:#55ffaa;border:1px solid #505050;box-sizing:border-box;"></div>
<div style="left:737px;top:404px;width:14px;height:14px;background:#ff55ff;border:1px solid #505050;box-sizing:border-box;"></div>
<div style="left:737px;top:428px;width:14px;height:14px;background:#5555ff;border:1px solid #505050;box-sizing:border-box;"></div>
<div style="left:737px;top:452px;width:14px;height:14px;background:#aaaaff;border:1px solid #505050;box-sizing:border-box;"></div>
<svg style="left:737px;top:476px" width="14" height="15" viewBox="0 0 14 15">
<rect x="0" y="7.4" width="14" height="1.7" fill="#ffe0ae"/><rect x="0" y="11" width="14" height="1.7" fill="#d8d8ff"/>
<rect x="0" y="1" width="14" height="2" fill="#2fa82f"/>
<path d="M7 3.2 V13.6" stroke="#3aa8fa" stroke-width="2.1" fill="none"/><path d="M3 7.6 L7 3.6 L11 7.6" stroke="#3aa8fa" stroke-width="1.3" fill="none"/>
</svg>
<svg style="left:737px;top:499px" width="14" height="15" viewBox="0 0 14 15">
<path d="M0 2.9 H14" stroke="#bdbdbd" stroke-width="1.7" stroke-dasharray="2 1.2"/><path d="M0 7 H14" stroke="#ffdcaa" stroke-width="1.7" stroke-dasharray="2 1.2"/>
<path d="M7 1.4 V12" stroke="#3aa8fa" stroke-width="2.1" fill="none"/><path d="M3 7.6 L7 11.6 L11 7.6" stroke="#3aa8fa" stroke-width="1.3" fill="none"/>
<rect x="0" y="12" width="14" height="2" fill="#2a2af2"/>
</svg>
<div style="left:762px;top:32px;width:246px;height:23px;background:#e1e1e1;border:1px solid #adadad;box-sizing:border-box;"></div>
<div style="left:833.20px;top:35.70px;font-family:'Liberation Sans', sans-serif;font-size:12px;line-height:16px;color:#f00808;white-space:pre;letter-spacing:0.018px;">Float Coordinate</div>
<svg style="left:993px;top:42px" width="8" height="4" viewBox="0 0 8 4"><path d="M0 0 H8 L4 4 Z" fill="#000"/></svg>
<div style="left:841px;top:58px;width:32px;height:32px;background:#f0f0f0;border:1px solid #3c3c3c;box-sizing:border-box;"></div>
<svg style="left:841px;top:58px" width="32" height="32" viewBox="0 0 32 32"><defs><linearGradient id="gu" x1="0" y1="0" x2="1" y2="1"><stop offset="0" stop-color="#0a28d0"/><stop offset="1" stop-color="#000870"/></linearGradient></defs><path d="M16.4 3.8 L30.2 17.5 H22 V26.9 H11.3 V17.5 H2.7 Z" fill="url(#gu)"/></svg>
<div style="left:791px;top:91px;width:32px;height:32px;background:#f0f0f0;border:1px solid #3c3c3c;box-sizing:border-box;"></div>
<svg style="left:791px;top:91px" width="32" height="32" viewBox="0 0 32 32"><defs><linearGradient id="gl" x1="0" y1="0" x2="1" y2="1"><stop offset="0" stop-color="#0a28d0"/><stop offset="1" stop-color="#000870"/></linearGradient></defs><path d="M4.2 15.4 L17.9 1.9 V9.2 H27.3 V21 H17.9 V28.9 Z" fill="url(#gl)"/></svg>
<div style="left:895px;top:91px;width:32px;height:32px;background:#f0f0f0;border:1px solid #3c3c3c;box-sizing:border-box;"></div>
<svg style="left:895px;top:91px" width="32" height="32" viewBox="0 0 32 32"><defs><linearGradient id="gr" x1="0" y1="0" x2="1" y2="1"><stop offset="0" stop-color="#0a28d0"/><stop offset="1" stop-color="#000870"/></linearGradient></defs><path d="M27.9 15.4 L14 1.9 V9.2 H4.9 V21 H14 V28.9 Z" fill="url(#gr)"/></svg>
<div style="left:841px;top:124px;width:32px;height:32px;background:#f0f0f0;border:1px solid #3c3c3c;box-sizing:border-box;"></div>
<svg style="left:841px;top:124px" width="32" height="32" viewBox="0 0 32 32"><defs><linearGradient id="gd" x1="0" y1="0" x2="1" y2="1"><stop offset="0" stop-color="#0a28d0"/><stop offset="1" stop-color="#000870"/></linearGradient></defs><path d="M16.4 28.1 L30.2 14.5 H22 V5.2 H11.3 V14.5 H2.7 Z" fill="url(#gd)"/></svg>
<div style="left:945px;top:58px;width:32px;height:32px;background:#f0f0f0;border:1px solid #3c3c3c;box-sizing:border-box;"></div>
<svg style="left:945px;top:58px" width="32" height="32" viewBox="0 0 32 32">
<defs><linearGradient id="nzu" x1="0" y1="0" x2="1" y2="0"><stop offset="0" stop-color="#9a9a9a"/><stop offset="0.45" stop-color="#dedede"/><stop offset="1" stop-color="#8c8c8c"/></linearGradient></defs>
<rect x="7" y="3" width="9.2" height="12.4" rx="0.8" fill="url(#nzu)"/>
<rect x="5.8" y="14.6" width="11" height="2.2" fill="#a8a8a8"/>
<rect x="7.8" y="16.8" width="7" height="5.8" fill="url(#nzu)"/>
<path d="M7.8 18.6 H14.8 M7.8 20.6 H14.8" stroke="#8a8a8a" stroke-width="0.7"/>
<path d="M8.4 23 H13.8 L12.4 26 L11.1 28 L9.8 26 Z" fill="#f0a400"/>
<path d="M23.4 23.8 V9" stroke="#0a0af0" stroke-width="1.7" fill="none"/><path d="M20.2 12.6 L23.4 4.7 L26.6 12.6 Z" fill="#0a0af0"/></svg>
<div style="left:945px;top:125px;width:32px;height:32px;background:#f0f0f0;border:1px solid #3c3c3c;box-sizing:border-box;"></div>
<svg style="left:945px;top:125px" width="32" height="32" viewBox="0 0 32 32">
<defs><linearGradient id="nzd" x1="0" y1="0" x2="1" y2="0"><stop offset="0" stop-color="#9a9a9a"/><stop offset="0.45" stop-color="#dedede"/><stop offset="1" stop-color="#8c8c8c"/></linearGradient></defs>
<rect x="7" y="3" width="9.2" height="12.4" rx="0.8" fill="url(#nzd)"/>
<rect x="5.8" y="14.6" width="11" height="2.2" fill="#a8a8a8"/>
<rect x="7.8" y="16.8" width="7" height="5.8" fill="url(#nzd)"/>
<path d="M7.8 18.6 H14.8 M7.8 20.6 H14.8" stroke="#8a8a8a" stroke-width="0.7"/>
<path d="M8.4 23 H13.8 L12.4 26 L11.1 28 L9.8 26 Z" fill="#f0a400"/>
<path d="M23.4 4.9 V19" stroke="#0a0af0" stroke-width="1.7" fill="none"/><path d="M20.2 16 L23.4 23.9 L26.6 16 Z" fill="#0a0af0"/></svg>
<div style="left:768px;top:138px;width:49px;height:19px;background:#e1e1e1;border:1px solid #adadad;box-sizing:border-box;"></div>
<div style="left:771.50px;top:139.70px;font-family:'Liberation Sans', sans-serif;font-size:13px;line-height:17px;color:#000;white-space:pre;letter-spacing:-0.607px;">Preview</div>
<div style="left:770px;top:167px;width:13px;height:13px;background:#fff;border:1px solid #333;box-sizing:border-box;"></div>
<div style="left:786.00px;top:166.50px;font-family:'Liberation Sans', sans-serif;font-size:12px;line-height:16px;color:#000;white-space:pre;">Fast</div>
<div style="left:812px;top:164px;width:60px;height:20px;background:#fff;border:1px solid #7a7a7a;box-sizing:border-box;"></div>
<div style="left:856px;top:165px;width:15px;height:18px;background:#e3e3e3;"></div>
<svg style="left:859.5px;top:172.5px" width="8" height="4" viewBox="0 0 8 4"><path d="M0.3 0.2 L4.0 3.6 L7.7 0.2" fill="none" stroke="#404040" stroke-width="1.1"/></svg>
<div style="left:817.48px;top:167.00px;font-family:'Liberation Mono', monospace;font-size:10px;line-height:14px;color:#000;white-space:pre;">20mm/s</div>
<div style="left:900px;top:167px;width:13px;height:13px;background:#fff;border:1px solid #333;box-sizing:border-box;"></div>
<div style="left:916.00px;top:166.50px;font-family:'Liberation Sans', sans-serif;font-size:12px;line-height:16px;color:#000;white-space:pre;">Step</div>
<div style="left:948px;top:164px;width:52px;height:20px;background:#fff;border:1px solid #7a7a7a;box-sizing:border-box;"></div>
<div style="left:984px;top:165px;width:15px;height:18px;background:#e3e3e3;"></div>
<svg style="left:987.5px;top:172.5px" width="8" height="4" viewBox="0 0 8 4"><path d="M0.3 0.2 L4.0 3.6 L7.7 0.2" fill="none" stroke="#404040" stroke-width="1.1"/></svg>
<div style="left:957.48px;top:167.00px;font-family:'Liberation Mono', monospace;font-size:10px;line-height:14px;color:#000;white-space:pre;">50mm</div>
<div style="left:770px;top:189px;width:13px;height:13px;background:#fff;border:1px solid #333;box-sizing:border-box;"></div>
<div style="left:786.00px;top:188.70px;font-family:'Liberation Sans', sans-serif;font-size:12px;line-height:16px;color:#000;white-space:pre;">Lasering while jog</div>
<div style="left:857px;top:195px;width:3px;height:3px;background:#1030d0;border-radius:1px"></div><div style="left:862px;top:196px;width:2px;height:2px;background:#1030d0"></div>
<div style="left:893px;top:188.5px;width:55px;height:16px;overflow:hidden;font-size:12px;line-height:16px;white-space:pre;position:absolute">Manual Pwr</div>
<div style="left:948px;top:186px;width:52px;height:20px;background:#fff;border:1px solid #7a7a7a;box-sizing:border-box;"></div>
<div style="left:984px;top:187px;width:15px;height:18px;background:#e3e3e3;"></div>
<svg style="left:987.5px;top:194.5px" width="8" height="4" viewBox="0 0 8 4"><path d="M0.3 0.2 L4.0 3.6 L7.7 0.2" fill="none" stroke="#404040" stroke-width="1.1"/></svg>
<div style="left:957.48px;top:189.00px;font-family:'Liberation Mono', monospace;font-size:10px;line-height:14px;color:#000;white-space:pre;">100%</div>
<div style="left:767px;top:232px;width:78px;height:23px;background:#e1e1e1;border:1px solid #adadad;box-sizing:border-box;"></div>
<div style="left:775.98px;top:235.80px;font-family:'Liberation Sans', sans-serif;font-size:12px;line-height:16px;color:#000;white-space:pre;">Set Record</div>
<div style="left:849px;top:232px;width:78px;height:23px;background:#e1e1e1;border:1px solid #adadad;box-sizing:border-box;"></div>
<div style="left:858.98px;top:235.80px;font-family:'Liberation Sans', sans-serif;font-size:12px;line-height:16px;color:#000;white-space:pre;">Go Record</div>
<div style="left:931px;top:232px;width:78px;height:23px;background:#e1e1e1;border:1px solid #adadad;box-sizing:border-box;"></div>
<svg style="left:939px;top:239px" width="12" height="9" viewBox="0 0 12 9"><rect x="0.5" y="0.5" width="11" height="8" rx="1" fill="#5a9af0" stroke="#3060c0" stroke-width="0.8"/><path d="M2 7 L9 1.5" stroke="#a8d0ff" stroke-width="1.5"/></svg>
<div style="left:956px;top:236px;width:36px;height:16px;overflow:hidden;font-size:12px;line-height:16px;white-space:pre">Record</div>
<svg style="left:995px;top:242px" width="7" height="4" viewBox="0 0 7 4"><path d="M0 0 H7 L3.5 4 Z" fill="#000"/></svg>
<div style="left:767px;top:257px;width:78px;height:26px;background:#e1e1e1;border:1px solid #adadad;box-sizing:border-box;"></div>
<div style="left:797.65px;top:262.70px;font-family:'Liberation Sans', sans-serif;font-size:12px;line-height:16px;color:#000;white-space:pre;">Shutter</div>
<svg style="left:774px;top:263px" width="14" height="14" viewBox="0 0 14 14"><defs><radialGradient id="led781270" cx="0.4" cy="0.35" r="0.7"><stop offset="0" stop-color="#b5b5b5"/><stop offset="0.6" stop-color="#7d7d7d"/><stop offset="1" stop-color="#4a4a4a"/></radialGradient></defs><circle cx="7" cy="7" r="6.7" fill="url(#led781270)"/></svg>
<div style="left:849px;top:257px;width:78px;height:26px;background:#e1e1e1;border:1px solid #adadad;box-sizing:border-box;"></div>
<div style="left:880.66px;top:262.70px;font-family:'Liberation Sans', sans-serif;font-size:12px;line-height:16px;color:#000;white-space:pre;">Aiming</div>
<svg style="left:856px;top:263px" width="14" height="14" viewBox="0 0 14 14"><defs><radialGradient id="led863270" cx="0.4" cy="0.35" r="0.7"><stop offset="0" stop-color="#b5b5b5"/><stop offset="0.6" stop-color="#7d7d7d"/><stop offset="1" stop-color="#4a4a4a"/></radialGradient></defs><circle cx="7" cy="7" r="6.7" fill="url(#led863270)"/></svg>
<div style="left:931px;top:257px;width:78px;height:26px;background:#e1e1e1;border:1px solid #adadad;box-sizing:border-box;"></div>
<div style="left:964.98px;top:262.70px;font-family:'Liberation Sans', sans-serif;font-size:12px;line-height:16px;color:#000;white-space:pre;">Laser</div>
<svg style="left:938px;top:263px" width="14" height="14" viewBox="0 0 14 14"><defs><radialGradient id="led945270" cx="0.4" cy="0.35" r="0.7"><stop offset="0" stop-color="#b5b5b5"/><stop offset="0.6" stop-color="#7d7d7d"/><stop offset="1" stop-color="#4a4a4a"/></radialGradient></defs><circle cx="7" cy="7" r="6.7" fill="url(#led945270)"/></svg>
<div style="left:767px;top:286px;width:78px;height:26px;background:#e1e1e1;border:1px solid #adadad;box-sizing:border-box;"></div>
<div style="left:799.66px;top:291.70px;font-family:'Liberation Sans', sans-serif;font-size:12px;line-height:16px;color:#000;white-space:pre;">Follow</div>
<svg style="left:774px;top:292px" width="14" height="14" viewBox="0 0 14 14"><defs><radialGradient id="led781299" cx="0.4" cy="0.35" r="0.7"><stop offset="0" stop-color="#b5b5b5"/><stop offset="0.6" stop-color="#7d7d7d"/><stop offset="1" stop-color="#4a4a4a"/></radialGradient></defs><circle cx="7" cy="7" r="6.7" fill="url(#led781299)"/></svg>
<div style="left:849px;top:286px;width:78px;height:26px;background:#e1e1e1;border:1px solid #adadad;box-sizing:border-box;"></div>
<div style="left:888.43px;top:291.70px;font-family:'Liberation Sans', sans-serif;font-size:12px;line-height:16px;color:#000;white-space:pre;">Puff</div>
<svg style="left:856px;top:292px" width="14" height="14" viewBox="0 0 14 14"><defs><radialGradient id="led863299" cx="0.4" cy="0.35" r="0.7"><stop offset="0" stop-color="#b5b5b5"/><stop offset="0.6" stop-color="#7d7d7d"/><stop offset="1" stop-color="#4a4a4a"/></radialGradient></defs><circle cx="7" cy="7" r="6.7" fill="url(#led863299)"/></svg>
<div style="left:931px;top:286px;width:78px;height:26px;background:#e1e1e1;border:1px solid #adadad;box-sizing:border-box;"></div>
<div style="left:951.99px;top:291.70px;font-family:'Liberation Sans', sans-serif;font-size:12px;line-height:16px;color:#000;white-space:pre;">Gas</div>
<svg style="left:995px;top:298px" width="7" height="4" viewBox="0 0 7 4"><path d="M0 0 H7 L3.5 4 Z" fill="#000"/></svg>
<div style="left:761px;top:325px;width:262px;height:248px;border:1px solid #dcdcdc;box-sizing:border-box;"></div>
<div style="left:769.00px;top:318.50px;font-family:'Liberation Sans', sans-serif;font-size:12px;line-height:16px;color:#000;white-space:pre;background:#f0f0f0;padding:0 2px;margin-left:-2px;">NC Control</div>
<div style="left:768px;top:341px;width:78px;height:28px;background:#e1e1e1;border:1px solid #adadad;box-sizing:border-box;"></div>
<div style="left:801.30px;top:347.70px;font-family:'Liberation Sans', sans-serif;font-size:12px;line-height:16px;color:#000;white-space:pre;letter-spacing:0.564px;">Start*</div>
<svg style="left:779px;top:349px" width="7" height="11" viewBox="0 0 7 11"><defs><linearGradient id="pl" x1="0" y1="0" x2="1" y2="0"><stop offset="0" stop-color="#0838a8"/><stop offset="1" stop-color="#2068e8"/></linearGradient></defs><path d="M0 0 L7 5.5 L0 11 Z" fill="url(#pl)"/></svg>
<div style="left:850px;top:341px;width:78px;height:28px;background:#cccccc;border:1px solid #bfbfbf;box-sizing:border-box;"></div>
<div style="left:882.98px;top:347.70px;font-family:'Liberation Sans', sans-serif;font-size:12px;line-height:16px;color:#838383;white-space:pre;">Pause</div>
<svg style="left:859px;top:350px" width="12" height="11" viewBox="0 0 12 11"><rect x="0.8" y="0.8" width="3.6" height="9.8" fill="#f4f4f4"/><rect x="6.8" y="0.8" width="3.6" height="9.8" fill="#f4f4f4"/><rect x="0" y="0" width="3.8" height="9.6" fill="#a6a6a6"/><rect x="6" y="0" width="3.8" height="9.6" fill="#a6a6a6"/></svg>
<div style="left:932px;top:341px;width:78px;height:28px;background:#e1e1e1;border:1px solid #adadad;box-sizing:border-box;"></div>
<div style="left:969.66px;top:347.70px;font-family:'Liberation Sans', sans-serif;font-size:12px;line-height:16px;color:#000;white-space:pre;">Stop</div>
<svg style="left:938px;top:347px" width="15" height="15" viewBox="0 0 15 15"><circle cx="7.5" cy="7.5" r="7.2" fill="#e30a0a" stroke="#b00000" stroke-width="0.5"/><path d="M4.7 4.7 L10.3 10.3 M10.3 4.7 L4.7 10.3" stroke="#fff" stroke-width="2.1"/></svg>
<div style="left:768px;top:372px;width:78px;height:28px;background:#e1e1e1;border:1px solid #adadad;box-sizing:border-box;"></div>
<div style="left:800.90px;top:378.70px;font-family:'Liberation Sans', sans-serif;font-size:12px;line-height:16px;color:#000;white-space:pre;letter-spacing:-0.494px;">Frame</div>
<svg style="left:775px;top:377px" width="15" height="17" viewBox="0 0 15 17"><rect x="0.5" y="3.5" width="13" height="12.5" fill="#d6d6ff" stroke="#6464f8" stroke-width="1"/><path d="M3.5 8.5 Q4 6 6.5 6.5 L8 5.5 L9.5 6.5 L11 6.5 Q12.5 8 12 11 Q11.5 13.5 8.5 13.5 H5 Q3 12.5 3.5 8.5 Z" fill="#5a5ae8"/><path d="M5.5 1.5 H9 M7.3 0.2 L9 1.5 L7.3 2.9" stroke="#3838e0" fill="none" stroke-width="0.9"/></svg>
<div style="left:850px;top:372px;width:78px;height:28px;background:#e1e1e1;border:1px solid #adadad;box-sizing:border-box;"></div>
<div style="left:886.33px;top:378.70px;font-family:'Liberation Sans', sans-serif;font-size:12px;line-height:16px;color:#000;white-space:pre;">Simu</div>
<svg style="left:861px;top:380px" width="7" height="11" viewBox="0 0 7 11"><path d="M0.8 0.9 L6.2 5.5 L0.8 10.1 Z" fill="none" stroke="#0c5c0c" stroke-width="1.4"/></svg>
<div style="left:932px;top:372px;width:78px;height:28px;background:#e1e1e1;border:1px solid #adadad;box-sizing:border-box;"></div>
<div style="left:960.66px;top:378.70px;font-family:'Liberation Sans', sans-serif;font-size:12px;line-height:16px;color:#000;white-space:pre;">Dry Cut</div>
<svg style="left:943px;top:380px" width="7" height="11" viewBox="0 0 7 11"><path d="M0.8 0.9 L6.2 5.5 L0.8 10.1 Z" fill="none" stroke="#1048c8" stroke-width="1.3"/></svg>
<div style="left:768px;top:402px;width:78px;height:28px;background:#e1e1e1;border:1px solid #adadad;box-sizing:border-box;"></div>
<div style="left:803.65px;top:408.70px;font-family:'Liberation Sans', sans-serif;font-size:12px;line-height:16px;color:#000;white-space:pre;">Loop</div>
<svg style="left:775px;top:409px" width="15" height="14" viewBox="0 0 15 14"><path d="M5.2 2.2 H3.4 Q1 2.2 1 4.6 V8.6 Q1 11 3.4 11 H4.6 M9.8 11.6 H11.4 Q13.8 11.6 13.8 9.2 V5.2 Q13.8 2.8 11.4 2.8 H10.2" fill="none" stroke="#484848" stroke-width="1.2"/><path d="M5 0.2 L8 2.2 L5 4.2 Z M10 9.6 L7 11.6 L10 13.6 Z" fill="#484848"/></svg>
<div style="left:850px;top:402px;width:78px;height:28px;background:#cccccc;border:1px solid #bfbfbf;box-sizing:border-box;"></div>
<div style="left:880.32px;top:408.70px;font-family:'Liberation Sans', sans-serif;font-size:12px;line-height:16px;color:#838383;white-space:pre;">Pt LOC</div>
<svg style="left:857px;top:412px" width="16" height="10" viewBox="0 0 16 10"><path d="M0 4.8 H7.5 M5 2 L7.8 4.8 L5 7.6" stroke="#f0f0f0" stroke-width="1.2" fill="none"/><rect x="9.3" y="0.5" width="2" height="9" fill="#f0f0f0"/><rect x="12.8" y="0.5" width="2" height="9" fill="#f0f0f0"/><rect x="9" y="0.5" width="1" height="8.5" fill="#b0b0b0"/><rect x="12.5" y="0.5" width="1" height="8.5" fill="#b0b0b0"/></svg>
<div style="left:932px;top:402px;width:78px;height:28px;background:#cccccc;border:1px solid #bfbfbf;box-sizing:border-box;"></div>
<div style="left:957.66px;top:408.70px;font-family:'Liberation Sans', sans-serif;font-size:12px;line-height:16px;color:#838383;white-space:pre;">Pt CONT</div>
<svg style="left:940px;top:412px" width="14" height="10" viewBox="0 0 14 10"><rect x="0" y="0.5" width="3" height="8.5" fill="#a8a8a8"/><rect x="2" y="0.5" width="1.5" height="9" fill="#f0f0f0"/><path d="M6 0.8 L13 4.8 L6 8.8 Z" fill="#f2f2f2"/><path d="M5.5 0.5 L5.5 8.5" stroke="#a8a8a8" stroke-width="1"/></svg>
<div style="left:768px;top:432px;width:78px;height:28px;background:#cccccc;border:1px solid #bfbfbf;box-sizing:border-box;"></div>
<div style="left:805.75px;top:438.70px;font-family:'Liberation Sans', sans-serif;font-size:12px;line-height:16px;color:#838383;white-space:pre;letter-spacing:-0.547px;">Back</div>
<svg style="left:786px;top:439px" width="14" height="13" viewBox="0 0 14 13"><path d="M6 0.6 L0.7 6.4 L6 12.2 H8.6 L3.6 6.4 L8.6 0.6 Z" fill="none" stroke="#9c9c9c" stroke-width="0.9"/><path d="M10.6 0.6 L5.6 6.4 L10.6 12.2 H13.2 L8.4 6.4 L13.2 0.6 Z" fill="#cccccc" stroke="#9c9c9c" stroke-width="0.9"/></svg>
<div style="left:850px;top:432px;width:78px;height:28px;background:#cccccc;border:1px solid #bfbfbf;box-sizing:border-box;"></div>
<div style="left:876.99px;top:438.70px;font-family:'Liberation Sans', sans-serif;font-size:12px;line-height:16px;color:#838383;white-space:pre;">Forward</div>
<svg style="left:858px;top:439px" width="14" height="13" viewBox="0 0 14 13"><path d="M8 0.6 L13.3 6.4 L8 12.2 H5.4 L10.4 6.4 L5.4 0.6 Z" fill="none" stroke="#9c9c9c" stroke-width="0.9"/><path d="M3.4 0.6 L8.4 6.4 L3.4 12.2 H0.8 L5.6 6.4 L0.8 0.6 Z" fill="#cccccc" stroke="#9c9c9c" stroke-width="0.9"/></svg>
<div style="left:932px;top:432px;width:78px;height:28px;background:#e1e1e1;border:1px solid #adadad;box-sizing:border-box;"></div>
<div style="left:938.50px;top:438.70px;font-family:'Liberation Sans', sans-serif;font-size:12px;line-height:16px;color:#000;white-space:pre;letter-spacing:0.088px;">Return Zero</div>
<div style="left:771px;top:471px;width:13px;height:13px;background:#fff;border:1px solid #333;box-sizing:border-box;"></div>
<svg style="left:771px;top:471px" width="13" height="13" viewBox="0 0 13 13"><path d="M2 5.8 L5.2 9 L11.2 2.4" fill="none" stroke="#1a1a1a" stroke-width="1.1"/></svg>
<div style="left:787.00px;top:470.70px;font-family:'Liberation Sans', sans-serif;font-size:12px;line-height:16px;color:#000;white-space:pre;letter-spacing:0.014px;">Finished, return</div>
<div style="left:917px;top:468px;width:92px;height:22px;background:#e1e1e1;border:1px solid #adadad;box-sizing:border-box;"></div>
<svg style="left:994.5px;top:477.0px" width="9" height="5" viewBox="0 0 9 5"><path d="M0.3 0.2 L4.5 4.6 L8.7 0.2" fill="none" stroke="#404040" stroke-width="1.1"/></svg>
<div style="left:921.00px;top:471.60px;font-family:'Liberation Sans', sans-serif;font-size:12px;line-height:16px;color:#000;white-space:pre;">Zero Point</div>
<div style="left:771px;top:490px;width:13px;height:13px;background:#fff;border:1px solid #333;box-sizing:border-box;"></div>
<div style="left:787.00px;top:489.70px;font-family:'Liberation Sans', sans-serif;font-size:12px;line-height:16px;color:#000;white-space:pre;letter-spacing:0.008px;">Only process selected graphics</div>
<div style="left:771px;top:509px;width:13px;height:13px;background:#fff;border:1px solid #333;box-sizing:border-box;"></div>
<div style="left:787.00px;top:508.70px;font-family:'Liberation Sans', sans-serif;font-size:12px;line-height:16px;color:#000;white-space:pre;letter-spacing:0.283px;">Soft limit protection</div>
<div style="left:771px;top:529px;width:13px;height:13px;background:#fff;border:1px solid #333;box-sizing:border-box;"></div>
<div style="left:787.00px;top:528.50px;font-family:'Liberation Sans', sans-serif;font-size:12px;line-height:16px;color:#000;white-space:pre;letter-spacing:0.124px;">Edge Seek Before Working</div>
<div style="left:769.50px;top:547.70px;font-family:'Liberation Sans', sans-serif;font-size:12px;line-height:16px;color:#000;white-space:pre;letter-spacing:-0.149px;">Back/Forward Dis:</div>
<div style="left:871px;top:545px;width:45px;height:20px;background:#fff;border:1px solid #7a7a7a;box-sizing:border-box;"></div>
<div style="left:900px;top:546px;width:15px;height:18px;background:#e3e3e3;"></div>
<svg style="left:903.5px;top:553.5px" width="8" height="4" viewBox="0 0 8 4"><path d="M0.3 0.2 L4.0 3.6 L7.7 0.2" fill="none" stroke="#404040" stroke-width="1.1"/></svg>
<div style="left:873.48px;top:548.50px;font-family:'Liberation Mono', monospace;font-size:10px;line-height:14px;color:#000;white-space:pre;">10mm</div>
<div style="left:921px;top:545px;width:65px;height:20px;background:#fff;border:1px solid #7a7a7a;box-sizing:border-box;"></div>
<div style="left:970px;top:546px;width:15px;height:18px;background:#e3e3e3;"></div>
<svg style="left:973.5px;top:553.5px" width="8" height="4" viewBox="0 0 8 4"><path d="M0.3 0.2 L4.0 3.6 L7.7 0.2" fill="none" stroke="#404040" stroke-width="1.1"/></svg>
<div style="left:931.48px;top:548.50px;font-family:'Liberation Mono', monospace;font-size:10px;line-height:14px;color:#000;white-space:pre;">50mm/s</div>
<div style="left:761px;top:584px;width:262px;height:73px;border:1px solid #dcdcdc;box-sizing:border-box;"></div>
<div style="left:769.00px;top:576.50px;font-family:'Liberation Sans', sans-serif;font-size:12px;line-height:16px;color:#000;white-space:pre;background:#f0f0f0;padding:0 2px;margin-left:-2px;">Counter</div>
<div style="left:795.44px;top:597.00px;font-family:'Liberation Sans', sans-serif;font-size:12px;line-height:16px;color:#000;white-space:pre;">Timer:</div>
<div style="left:831.00px;top:597.00px;font-family:'Liberation Sans', sans-serif;font-size:12px;line-height:16px;color:#000;white-space:pre;">9min26s</div>
<div style="left:795.64px;top:617.00px;font-family:'Liberation Sans', sans-serif;font-size:12px;line-height:16px;color:#000;white-space:pre;">Piece:</div>
<div style="left:831.00px;top:617.00px;font-family:'Liberation Sans', sans-serif;font-size:12px;line-height:16px;color:#000;white-space:pre;">0</div>
<div style="left:801.64px;top:636.50px;font-family:'Liberation Sans', sans-serif;font-size:12px;line-height:16px;color:#000;white-space:pre;">Plan:</div>
<div style="left:831.00px;top:636.50px;font-family:'Liberation Sans', sans-serif;font-size:12px;line-height:16px;color:#000;white-space:pre;">100</div>
<div style="left:946px;top:624px;width:73px;height:23px;background:#e1e1e1;border:1px solid #adadad;box-sizing:border-box;"></div>
<div style="left:965.16px;top:628.20px;font-family:'Liberation Sans', sans-serif;font-size:12px;line-height:16px;color:#000;white-space:pre;">Config</div>
</div></body></html>
